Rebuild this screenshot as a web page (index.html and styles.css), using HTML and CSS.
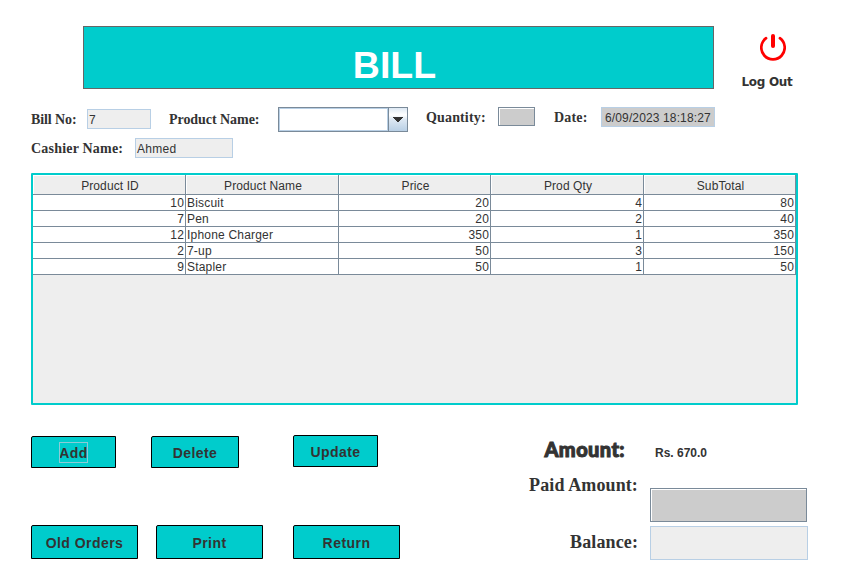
FILE: index.html
```html
<!DOCTYPE html>
<html lang="en">
<head>
<meta charset="utf-8">
<title>Bill</title>
<link rel="stylesheet" href="styles.css">
</head>
<body>
<header class="top">
  <h1 class="banner">BILL</h1>
  <div class="logout">
    <svg class="power" width="26" height="27" viewBox="0 0 26 27" fill="none" stroke="#f00" stroke-linecap="round">
      <path d="M6.1 4.2A11.7 11.7 0 1 0 19.9 4.2" stroke-width="2.7"/>
      <path d="M13 2V12" stroke-width="4"/>
    </svg>
    <span class="logout-text">Log Out</span>
  </div>
</header>
<section class="fields">
  <label class="label bill-label">Bill No:</label>
  <div class="field bill-no">7</div>
  <label class="label product-label">Product Name:</label>
  <div class="combo"><div class="combo-value"></div><div class="combo-arrow"><svg width="10" height="5" viewBox="0 0 10 5"><path d="M0 0H10V1H9V2H8V3H7V4H6V5H4V4H3V3H2V2H1V1H0Z" fill="#333"/></svg></div></div>
  <label class="label quantity-label">Quantity:</label>
  <div class="etched quantity"></div>
  <label class="label date-label">Date:</label>
  <div class="field date">6/09/2023 18:18:27</div>
</section>
<section class="cashier-row">
  <label class="label cashier-label">Cashier Name:</label>
  <div class="field cashier">Ahmed</div>
</section>
<div class="table-pane">
  <table class="items">
    <colgroup><col class="wide"><col class="wide"><col class="narrow"><col class="wide"><col class="narrow"></colgroup>
    <thead><tr><th>Product ID</th><th>Product Name</th><th>Price</th><th>Prod Qty</th><th>SubTotal</th></tr></thead>
    <tbody>
      <tr><td>10</td><td class="name">Biscuit</td><td>20</td><td>4</td><td>80</td></tr>
      <tr><td>7</td><td class="name">Pen</td><td>20</td><td>2</td><td>40</td></tr>
      <tr><td>12</td><td class="name">Iphone Charger</td><td>350</td><td>1</td><td>350</td></tr>
      <tr><td>2</td><td class="name">7-up</td><td>50</td><td>3</td><td>150</td></tr>
      <tr><td>9</td><td class="name">Stapler</td><td>50</td><td>1</td><td>50</td></tr>
    </tbody>
  </table>
</div>
<footer class="bottom">
  <div class="actions">
    <div class="button-row first">
      <button class="btn add"><span class="focus">Add</span></button>
      <button class="btn delete">Delete</button>
      <button class="btn update">Update</button>
    </div>
    <div class="button-row second">
      <button class="btn orders">Old Orders</button>
      <button class="btn print">Print</button>
      <button class="btn return">Return</button>
    </div>
  </div>
  <div class="totals">
    <div class="captions">
      <div class="amount-label">Amount:</div>
      <div class="total-label paid-label">Paid Amount:</div>
      <div class="total-label balance-label">Balance:</div>
    </div>
    <div class="values">
      <div class="amount">Rs. 670.0</div>
      <div class="etched paid"></div>
      <div class="field balance"></div>
    </div>
  </div>
</footer>
</body>
</html>
```
FILE: styles.css
```css
* { box-sizing: border-box; }
body {
  margin: 0;
  width: 841px;
  height: 572px;
  overflow: hidden;
  padding-top: 26px;
  background: #fff;
  color: #333;
  font: 12px/14px "Liberation Sans", sans-serif;
  white-space: nowrap;
}
.top { display: flex; height: 63px; padding-left: 83px; }
.banner {
  width: 631px;
  height: 63px;
  margin: 0;
  padding: 18px 8px 0 0;
  border: 1px solid #666;
  background: #00cccc;
  color: #fff;
  font: bold 37.5px/40px "Liberation Sans", sans-serif;
  text-align: center;
}
.logout { display: flex; flex-direction: column; align-items: center; width: 62px; margin-left: 28px; padding-top: 8px; }
.power { display: block; }
.logout-text { margin: 14px 12px 0 0; font: bold 12px/14px "DejaVu Sans", sans-serif; letter-spacing: -0.3px; }

.fields { display: flex; align-items: flex-start; height: 49px; padding: 18px 0 0 31px; }
.label { font: bold 14px/16px "Liberation Serif", serif; }
.field { height: 20px; border: 1px solid #b8cfe5; background: #eee; padding: 3px 1px 0; line-height: 15px; }
.bill-label { width: 56px; padding-top: 5px; letter-spacing: -0.1px; }
.bill-no { width: 64px; margin-top: 2px; }
.product-label { width: 109px; margin-left: 18px; padding-top: 5px; letter-spacing: -0.05px; }
.combo { display: flex; width: 130px; height: 25px; border: 1px solid #7a8a99; }
.combo-value { width: 109px; border: 1px solid #b8cfe5; }
.combo-arrow {
  display: flex;
  flex: 1;
  align-items: center;
  justify-content: center;
  padding-right: 1px;
  border-left: 1px solid #7a8a99;
  background: linear-gradient(#dde8f3, #fff 30%, #dde8f3 50%, #b8cfe5);
}
.quantity-label { width: 72px; margin-left: 18px; padding-top: 3px; letter-spacing: 0.15px; }
.etched { border: 1px solid #7a8a99; background: #ccc; box-shadow: inset 1px 1px #fff; }
.quantity { width: 37px; height: 19px; }
.date-label { width: 47px; margin-left: 19px; padding-top: 3px; letter-spacing: 0.2px; }
.date { width: 114px; background: #ccc; padding-left: 3px; letter-spacing: 0.13px; }
.cashier-row { display: flex; padding-left: 31px; height: 35px; }
.cashier-label { width: 104px; padding-top: 3px; letter-spacing: 0.2px; }
.cashier { width: 98px; letter-spacing: 0.3px; }

.table-pane { width: 767px; height: 232px; margin-left: 31px; border: 2px solid #00cccc; border-radius: 1px; background: #eee; }
.items { width: 763px; border-collapse: separate; border-spacing: 0; table-layout: fixed; }
.wide { width: 153px; }
.narrow { width: 152px; }
.items th, .items td { border: solid #7a8a99; border-width: 0 1px 1px 0; }
.items th { height: 20px; padding: 3px 0 0 2px; font-weight: normal; line-height: 14px; letter-spacing: 0.1px; background: #eee; box-shadow: inset 1px 1px #fff; }
.items td { height: 16px; padding: 1px 1px 0 1px; line-height: 14px; background: #fff; text-align: right; letter-spacing: 0.15px; }
.items .name { text-align: left; letter-spacing: 0.2px; }

.bottom { display: flex; height: 167px; padding-left: 31px; }
.actions { width: 498px; padding-top: 30px; }
.button-row { display: flex; align-items: flex-start; }
.btn { height: 34px; padding: 2px 0 0; border: 1px solid #000; background: #00cccc; color: #333; font: bold 14px/16px "Liberation Sans", sans-serif; letter-spacing: 0.45px; border-top-left-radius: 2px; }
.first { height: 90px; }
.first .btn { height: 32px; }
.add, .delete { margin-top: 1px; }
.first .add { width: 85px; padding-top: 1px; }
.delete { width: 88px; margin-left: 35px; }
.update { width: 85px; margin-left: 54px; }
.focus { display: inline-block; width: 29px; height: 21px; line-height: 22px; outline: 1px solid #8ccbd6; outline-offset: -1px; }
.orders, .print, .return { width: 107px; }
.print { margin-left: 18px; }
.return { margin-left: 30px; }

.totals { display: flex; }
.captions { display: flex; flex-direction: column; align-items: flex-end; width: 109px; padding-top: 32px; }
.amount-label { margin-right: 13px; font: 900 20px/24px Lato, sans-serif; letter-spacing: 0.4px; -webkit-text-stroke: 1px #333; }
.total-label { font: bold 18px/20px "Liberation Serif", serif; letter-spacing: 0.12px; }
.paid-label { margin-top: 14px; }
.balance-label { margin-top: 37px; }
.values { width: 158px; margin-left: 12px; padding-top: 41px; }
.amount { height: 42px; padding-left: 5px; font-weight: bold; }
.paid { width: 157px; height: 34px; }
.balance { width: 158px; height: 34px; margin-top: 4px; }
```
